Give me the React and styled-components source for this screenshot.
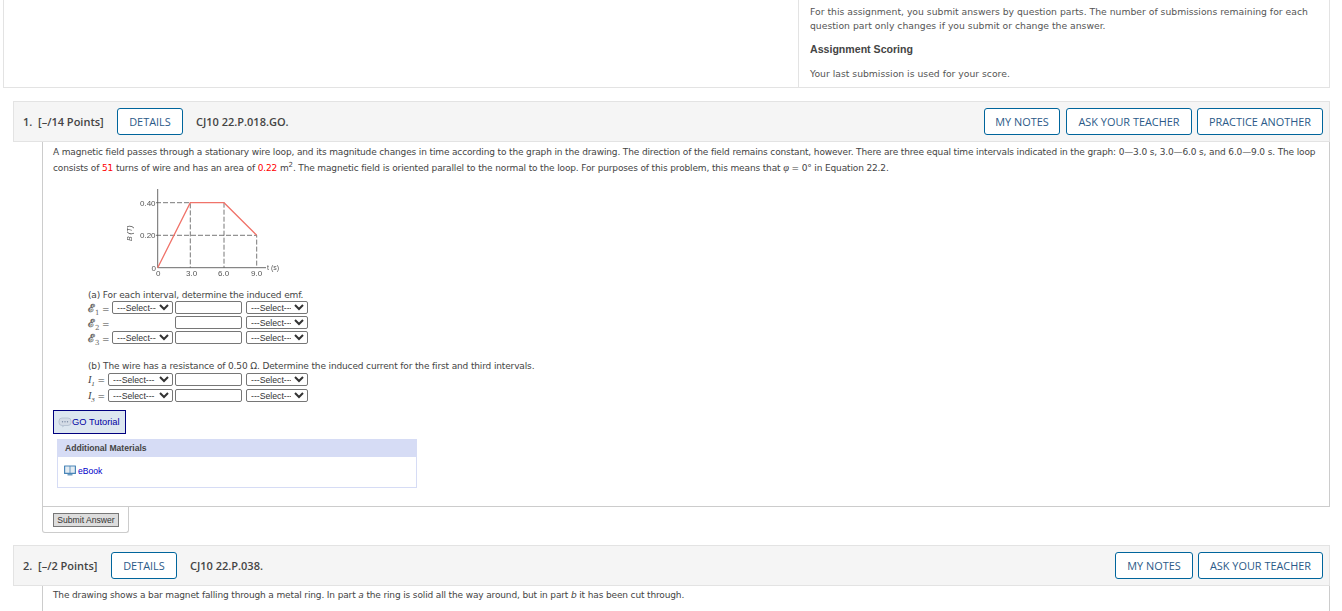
import React from 'react';
import styled, { createGlobalStyle } from 'styled-components';

const GlobalStyle = createGlobalStyle`
html, body {
  margin: 0;
  padding: 0;
  height: 611px;
  overflow: hidden;
  background: #fff;
}
body {
  font-family: "DejaVu Sans", Verdana, sans-serif;
  font-size: 9px;
  letter-spacing: -0.14px;
  color: #444;
}
`;

const Page = styled.div`
  width: 1342px;
  height: 611px;
  overflow: hidden;
`;

const TopPanel = styled.div`
  display: flex;
  justify-content: flex-end;
  box-sizing: border-box;
  width: 1327px;
  height: 88px;
  margin-left: 3px;
  border: 1px solid #e3e3e3;
  border-top: none;
`;

const InfoCell = styled.div`
  box-sizing: border-box;
  width: 531px;
  padding: 5px 9px 0 11px;
  border-left: 1px solid #e3e3e3;
  font-size: 9.26px;
  letter-spacing: 0;
  line-height: 14px;
  color: #555;
`;

const InfoLine = styled.div`
  white-space: nowrap;
`;

const InfoTitle = styled.div`
  margin: 9px 0 11px;
  font-family: "Liberation Sans", Arial, sans-serif;
  font-size: 10.6px;
  font-weight: 700;
  color: #444;
`;

const QuestionHeader = styled.div`
  display: flex;
  align-items: center;
  box-sizing: border-box;
  width: 1317px;
  height: 41px;
  margin: ${(p) => p.$top}px 0 0 13px;
  padding: 0 6px 0 9px;
  background: #f5f5f5;
  border: 1px solid #e3e3e3;
  letter-spacing: 0;
`;

const Points = styled.div`
  width: ${(p) => p.$width}px;
  font-family: "Open Sans", sans-serif;
  font-size: 11px;
  font-weight: 600;
  color: #444;
  white-space: pre;
`;

const QuestionCode = styled.div`
  flex: 1;
  margin-left: 13px;
  font-family: "Open Sans", sans-serif;
  font-size: 11px;
  font-weight: 600;
  color: #444;
`;

const HeaderButton = styled.button`
  box-sizing: border-box;
  width: ${(p) => p.$width}px;
  height: 27px;
  margin-left: ${(p) => p.$gap || 0}px;
  padding: 0;
  background: #fff;
  border: 1px solid #00659c;
  border-radius: 3px;
  font-family: "Open Sans", sans-serif;
  font-size: 10.9px;
  font-weight: 500;
  color: #2b5a88;
`;

const QuestionBody = styled.div`
  box-sizing: border-box;
  width: 1288px;
  height: ${(p) => p.$height}px;
  margin-left: 42px;
  padding: ${(p) => p.$pad}px 8px 0 10px;
  border-left: 1px solid #ccc;
  border-right: 1px solid #ccc;
  border-bottom: 1px solid #ccc;
`;

const TextLine = styled.div`
  line-height: 15px;
  white-space: pre;
`;

const Red = styled.span`
  color: #f00;
`;

const Sup = styled.sup`
  font-size: 7px;
  line-height: 0;
`;

const MathSymbol = styled.span`
  font-family: "Liberation Serif", serif;
  font-style: italic;
  font-size: 10.5px;
  color: #444;
`;

const ScriptSymbol = styled.span`
  font-family: "DejaVu Serif", "Liberation Serif", serif;
  font-size: 11px;
  font-weight: 700;
  color: #666;
`;

const Sub = styled.sub`
  font-size: 7px;
  font-weight: 400;
  line-height: 0;
`;

const GraphBox = styled.div`
  margin: 13px 0 0 52px;
  height: 102px;
`;

const GraphSvg = styled.svg`
  display: block;
  filter: blur(0.35px);
`;

const PartBlock = styled.div`
  margin: ${(p) => p.$top}px 0 0 35px;
`;

const PartTitle = styled.div`
  height: ${(p) => p.$height}px;
  line-height: 9px;
`;

const AnswerRow = styled.div`
  display: flex;
  align-items: center;
  height: ${(p) => p.$height || 15}px;
`;

const RowLabel = styled.div`
  width: ${(p) => p.$width}px;
  flex: none;
  white-space: pre;
`;

const Select = styled.select`
  box-sizing: border-box;
  width: ${(p) => p.$width || 62}px;
  height: 13px;
  margin: 0 2px 0 0;
  padding: 0;
  font-family: "Liberation Sans", Arial, sans-serif;
  font-size: 8.7px;
  color: #333;
  background: #fff;
  border: 1px solid #767676;
  border-radius: 2px;
`;

const NumberInput = styled.input`
  box-sizing: border-box;
  width: 67px;
  height: 13px;
  margin: 0 4px 0 0;
  padding: 0;
  background: #fff;
  border: 1px solid #767676;
  border-radius: 2px;
`;

const TutorialButton = styled.div`
  display: flex;
  align-items: center;
  box-sizing: border-box;
  width: 73px;
  height: 24px;
  margin-top: 6px;
  padding-left: 4px;
  background: #dce6f0;
  border: 1px solid #00007f;
  font-family: "Liberation Sans", Arial, sans-serif;
  font-size: 9.3px;
  letter-spacing: 0;
  color: #0000a0;
`;

const MaterialsPanel = styled.div`
  box-sizing: border-box;
  width: 360px;
  height: 49px;
  margin: 5px 0 0 4px;
  border: 1px solid #d6dcf5;
  font-family: "Liberation Sans", Arial, sans-serif;
  font-size: 8.6px;
  letter-spacing: 0;
`;

const MaterialsTitle = styled.div`
  height: 17px;
  padding-left: 7px;
  line-height: 17px;
  background: #d6dcf5;
  font-weight: 700;
  color: #444;
`;

const MaterialsLink = styled.div`
  display: flex;
  align-items: center;
  gap: 2px;
  margin: 8px 0 0 6px;
  color: #0000c8;
`;

const SubmitTab = styled.div`
  display: flex;
  align-items: center;
  box-sizing: border-box;
  width: 87px;
  height: 26px;
  margin-left: 42px;
  padding-left: 10px;
  border: 1px solid #ccc;
  border-top: none;
  border-radius: 0 0 3px 3px;
`;

const SubmitButton = styled.button`
  box-sizing: border-box;
  width: 66px;
  height: 14px;
  padding: 0;
  background: #ddd;
  border: 1px solid #777;
  font-family: "Liberation Sans", Arial, sans-serif;
  font-size: 8.6px;
  color: #333;
`;

function Graph() {
  const dash = { stroke: '#555', strokeWidth: 0.8, strokeDasharray: '5 2', fill: 'none' };
  return (
    <GraphSvg width="180" height="100" viewBox="0 0 180 100">
      <path d="M52.7 0V78.7H161" stroke="#444" strokeWidth="0.8" fill="none" />
      <path d="M51 13.7H85.3V78.7" {...dash} />
      <path d="M51 46.3H151.7V78.7" {...dash} />
      <path d="M119 13.7V78.7" {...dash} />
      <path d="M52.7 78.7L85.3 13.7H119L151.7 46.3" stroke="#f0736a" strokeWidth="1.3" fill="none" />
      <g fontFamily="Liberation Sans, sans-serif" fontSize="8" fill="#555" letterSpacing="0">
        <text x="35" y="16.7">0.40</text>
        <text x="35" y="49.3">0.20</text>
        <text x="46.5" y="81.5">0</text>
        <text x="51" y="87">0</text>
        <text x="81" y="87">3.0</text>
        <text x="113" y="87">6.0</text>
        <text x="146" y="87">9.0</text>
        <text x="162" y="81" fontSize="7">t (s)</text>
        <text transform="translate(27 52) rotate(-90)" fontSize="7" fontStyle="italic">B (T)</text>
      </g>
    </GraphSvg>
  );
}

function BubbleIcon() {
  return (
    <svg width="14" height="11" viewBox="0 0 14 11">
      <rect x="1" y="1" width="12" height="7.5" rx="3" fill="#d3dbe6" stroke="#aab8ca" strokeWidth="0.7" />
      <path d="M4 8.3L4.5 10.5L7 8.3Z" fill="#bac6d6" />
      <circle cx="4.5" cy="4.7" r="0.7" fill="#7d8ca6" />
      <circle cx="7" cy="4.7" r="0.7" fill="#7d8ca6" />
      <circle cx="9.5" cy="4.7" r="0.7" fill="#7d8ca6" />
    </svg>
  );
}

function BookIcon() {
  return (
    <svg width="12" height="11" viewBox="0 0 12 11">
      <rect x="0" y="0.5" width="12" height="8.5" rx="0.5" fill="#4a86b8" />
      <path d="M1.2 1.5H5.6V7.8H1.2ZM6.4 1.5H10.8V7.8H6.4Z" fill="#e3ebf2" />
      <path d="M3.5 9H8.5V10.5H3.5Z" fill="#6f9cc2" />
    </svg>
  );
}

export default function App() {
  return (
    <Page>
      <GlobalStyle />
      <TopPanel>
        <InfoCell>
          <InfoLine>For this assignment, you submit answers by question parts. The number of submissions remaining for each</InfoLine>
          <InfoLine>question part only changes if you submit or change the answer.</InfoLine>
          <InfoTitle>Assignment Scoring</InfoTitle>
          <InfoLine>Your last submission is used for your score.</InfoLine>
        </InfoCell>
      </TopPanel>

      <QuestionHeader $top={13}>
        <Points $width={94}>{'1.  [–/14 Points]'}</Points>
        <HeaderButton $width={66}>DETAILS</HeaderButton>
        <QuestionCode>CJ10 22.P.018.GO.</QuestionCode>
        <HeaderButton $width={76}>MY NOTES</HeaderButton>
        <HeaderButton $width={126} $gap={6}>ASK YOUR TEACHER</HeaderButton>
        <HeaderButton $width={126} $gap={5}>PRACTICE ANOTHER</HeaderButton>
      </QuestionHeader>

      <QuestionBody $height={365} $pad={3}>
        <TextLine>A magnetic field passes through a stationary wire loop, and its magnitude changes in time according to the graph in the drawing. The direction of the field remains constant, however. There are three equal time intervals indicated in the graph: 0—3.0 s, 3.0—6.0 s, and 6.0—9.0 s. The loop</TextLine>
        <TextLine>consists of <Red>51</Red> turns of wire and has an area of <Red>0.22</Red> m<Sup>2</Sup>. The magnetic field is oriented parallel to the normal to the loop. For purposes of this problem, this means that <MathSymbol>φ</MathSymbol> = 0° in Equation 22.2.</TextLine>

        <GraphBox>
          <Graph />
        </GraphBox>

        <PartBlock $top={0}>
          <PartTitle $height={9}>(a) For each interval, determine the induced emf.</PartTitle>
          <AnswerRow>
            <RowLabel $width={24}><ScriptSymbol>ℰ<Sub>1</Sub></ScriptSymbol> =</RowLabel>
            <Select $width={61}><option>---Select---</option></Select>
            <NumberInput />
            <Select><option>---Select---</option></Select>
          </AnswerRow>
          <AnswerRow>
            <RowLabel $width={87}><ScriptSymbol>ℰ<Sub>2</Sub></ScriptSymbol> =</RowLabel>
            <NumberInput />
            <Select><option>---Select---</option></Select>
          </AnswerRow>
          <AnswerRow>
            <RowLabel $width={24}><ScriptSymbol>ℰ<Sub>3</Sub></ScriptSymbol> =</RowLabel>
            <Select $width={61}><option>---Select---</option></Select>
            <NumberInput />
            <Select><option>---Select---</option></Select>
          </AnswerRow>
        </PartBlock>

        <PartBlock $top={17}>
          <PartTitle $height={10}>(b) The wire has a resistance of 0.50 Ω. Determine the induced current for the first and third intervals.</PartTitle>
          <AnswerRow>
            <RowLabel $width={20}><MathSymbol>I<Sub>1</Sub></MathSymbol> =</RowLabel>
            <Select $width={65}><option>---Select---</option></Select>
            <NumberInput />
            <Select><option>---Select---</option></Select>
          </AnswerRow>
          <AnswerRow $height={17}>
            <RowLabel $width={20}><MathSymbol>I<Sub>3</Sub></MathSymbol> =</RowLabel>
            <Select $width={65}><option>---Select---</option></Select>
            <NumberInput />
            <Select><option>---Select---</option></Select>
          </AnswerRow>
        </PartBlock>

        <TutorialButton><BubbleIcon />GO Tutorial</TutorialButton>

        <MaterialsPanel>
          <MaterialsTitle>Additional Materials</MaterialsTitle>
          <MaterialsLink><BookIcon />eBook</MaterialsLink>
        </MaterialsPanel>
      </QuestionBody>

      <SubmitTab>
        <SubmitButton>Submit Answer</SubmitButton>
      </SubmitTab>

      <QuestionHeader $top={12}>
        <Points $width={88}>{'2.  [–/2 Points]'}</Points>
        <HeaderButton $width={66}>DETAILS</HeaderButton>
        <QuestionCode>CJ10 22.P.038.</QuestionCode>
        <HeaderButton $width={78}>MY NOTES</HeaderButton>
        <HeaderButton $width={125} $gap={5}>ASK YOUR TEACHER</HeaderButton>
      </QuestionHeader>

      <QuestionBody $height={60} $pad={2}>
        <TextLine>The drawing shows a bar magnet falling through a metal ring. In part <i>a</i> the ring is solid all the way around, but in part <i>b</i> it has been cut through.</TextLine>
      </QuestionBody>
    </Page>
  );
}
